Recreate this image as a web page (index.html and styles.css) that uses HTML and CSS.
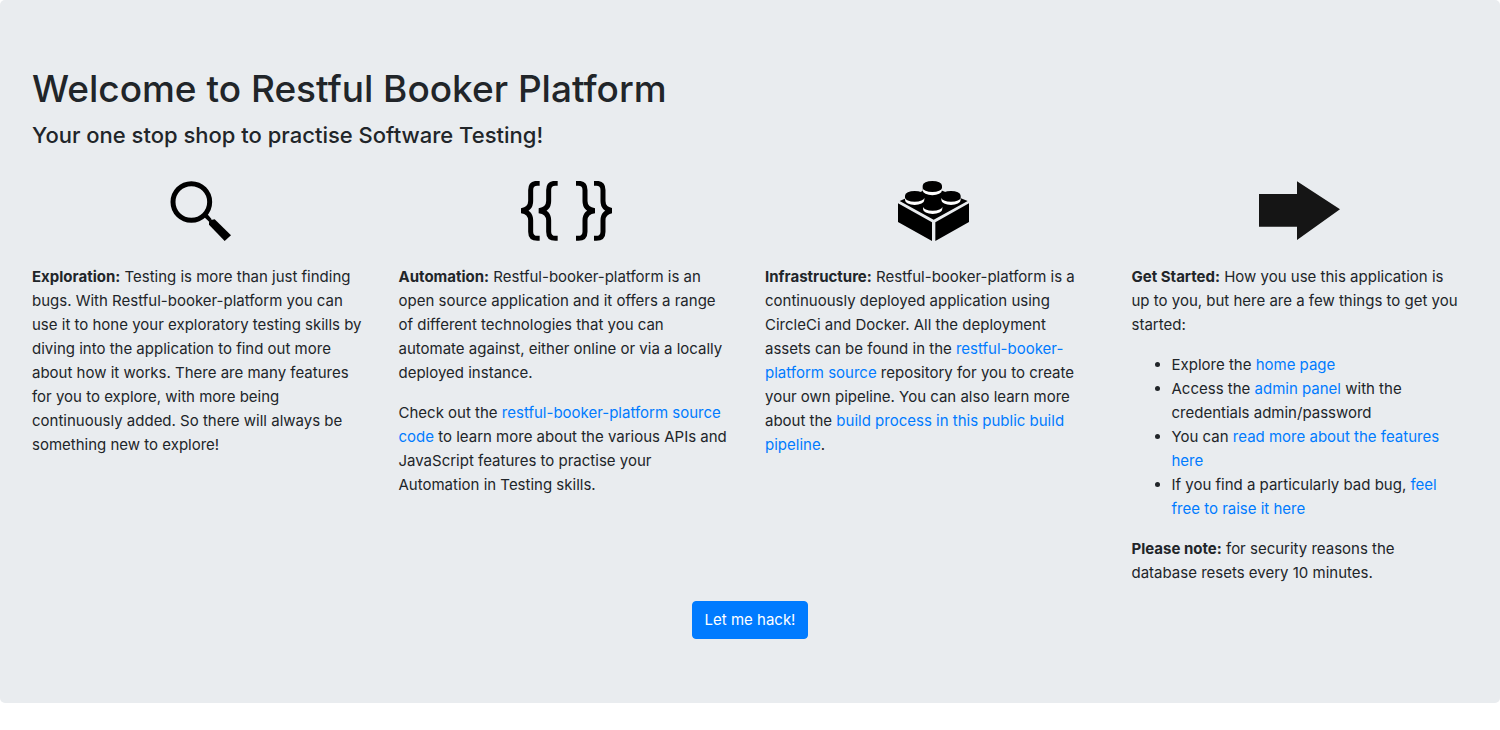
FILE: index.html
```
<!DOCTYPE html>
<html lang="en">
<head>
<meta charset="utf-8">
<meta name="viewport" content="width=device-width, initial-scale=1">
<title>Restful Booker Platform</title>
<link rel="stylesheet" href="styles.css">
</head>
<body>
<main class="welcome">
  <h1 class="title">Welcome to Restful Booker Platform</h1>
  <h2 class="subtitle">Your one stop shop to practise Software Testing!</h2>
  <div class="columns">
    <section class="column">
      <svg class="icon" viewBox="60 33 183 180" aria-hidden="true">
        <circle cx="124" cy="96" r="55" fill="none" stroke="#000" stroke-width="15"/>
        <path d="M160 139l10-9 15 18-6 9z"/>
        <path d="M177 157q1-5 6-7l11-2 49 48-19 17-47-49z"/>
      </svg>
      <p><strong>Exploration:</strong> Testing is more than just finding bugs. With Restful-booker-platform you can use it to hone your exploratory testing skills by diving into the application to find out more about how it works. There are many features for you to explore, with more being continuously added. So there will always be something new to explore!</p>
    </section>
    <section class="column">
      <svg class="icon" viewBox="33 33 274 180" aria-hidden="true">
        <g fill="none" stroke="#000" stroke-width="15">
          <path d="M89 40h-7q-20 0-20 20v33q0 25-29 29q29 4 29 29v34q0 20 20 20h7"/>
          <path d="M143 40h-7q-20 0-20 20v33q0 25-29 29q29 4 29 29v34q0 20 20 20h7"/>
          <path d="M198 40h7q20 0 20 20v33q0 25 29 29q-29 4-29 29v34q0 20-20 20h-7"/>
          <path d="M252 40h7q20 0 20 20v33q0 25 29 29q-29 4-29 29v34q0 20-20 20h-7"/>
        </g>
      </svg>
      <p><strong>Automation:</strong> Restful-booker-platform is an open source application and it offers a range<br>of different technologies that you can<br>automate against, either online or via a locally<br>deployed instance.</p>
      <p>Check out the <a href="#source">restful-booker-platform source code</a> to learn more about the various APIs and JavaScript features to practise your Automation in Testing skills.</p>
    </section>
    <section class="column">
      <svg class="icon" viewBox="39 33 213 180" aria-hidden="true">
        <path d="M39 100l102 57v56L39 156zM252 100l-101 57v56l101-57zM44 93l98-43 106 43-102 56z"/>
        <path d="M113 47a29 14 0 0 1 58 0v16h-58zM60 77a29 14 0 0 1 58 0v16H60zM169 77a29 14 0 0 1 58 0v16h-58z"/>
        <g fill="#fff">
          <path d="M113 54v7a29 15 0 0 0 58 0v-7a29 12 0 0 1-58 0z"/>
          <path d="M60 83v7a29 15 0 0 0 58 0v-7a29 12 0 0 1-58 0z"/>
          <path d="M169 83v7a29 15 0 0 0 58 0v-7a29 12 0 0 1-58 0z"/>
          <path d="M114 110v7a29 15 0 0 0 58 0v-7a29 12 0 0 1-58 0z"/>
        </g>
      </svg>
      <p><strong>Infrastructure:</strong> Restful-booker-platform is a continuously deployed application using CircleCi and Docker. All the deployment<br>assets can be found in the <a href="#source">restful-booker-<wbr>platform source</a> repository for you to create<br>your own pipeline. You can also learn more<br>about the <a href="#build">build process in this public build<br>pipeline</a>.</p>
    </section>
    <section class="column">
      <svg class="icon" viewBox="45 33 243 180" aria-hidden="true">
        <path fill="#151515" d="M45 72h114V34l129 84-129 92v-40H45z"/>
      </svg>
      <p><strong>Get Started:</strong> How you use this application is<br>up to you, but here are a few things to get you started:</p>
      <ul class="steps">
        <li>Explore the <a href="#home">home page</a></li>
        <li>Access the <a href="#admin">admin panel</a> with the credentials admin/password</li>
        <li>You can <a href="#features">read more about the features here</a></li>
        <li>If you find a particularly bad bug, <a href="#issues">feel free to raise it here</a></li>
      </ul>
      <p><strong>Please note:</strong> for security reasons the<br>database resets every 10 minutes.</p>
    </section>
  </div>
  <div class="actions">
    <button class="button" type="button">Let me hack!</button>
  </div>
</main>
</body>
</html>
```
FILE: styles.css
```
* {
  box-sizing: border-box;
}

body {
  margin: 0;
  background: #fff;
  color: #212529;
  font-family: Inter, "Liberation Sans", sans-serif;
  font-size: 15px;
  line-height: 24px;
}

.welcome {
  padding: 65px 32px 64px;
  background: #e9ecef;
  border-radius: 5px;
}

.title {
  margin: 0 0 8px;
  font-size: 37px;
  font-weight: 500;
  line-height: 48px;
}

.subtitle {
  margin: 0 0 31px;
  font-size: 22px;
  font-weight: 500;
  line-height: 29px;
}

.columns {
  display: grid;
  grid-template-columns: repeat(4, minmax(0, 1fr));
  gap: 30px;
}

.icon {
  display: block;
  height: 60px;
  margin: 0 auto 24px;
}

.column p,
.steps {
  margin: 0 0 16px;
}

.steps {
  padding-left: 40px;
}

strong {
  font-weight: 700;
}

a {
  color: #007bff;
  text-decoration: none;
}

a:hover {
  text-decoration: underline;
}

.actions {
  display: flex;
  justify-content: center;
}

.button {
  padding: 6px 12px;
  border: 1px solid #007bff;
  border-radius: 4px;
  background: #007bff;
  color: #fff;
  font: inherit;
  cursor: pointer;
}

@media (max-width: 900px) {
  .columns {
    grid-template-columns: repeat(2, minmax(0, 1fr));
  }
}
```
